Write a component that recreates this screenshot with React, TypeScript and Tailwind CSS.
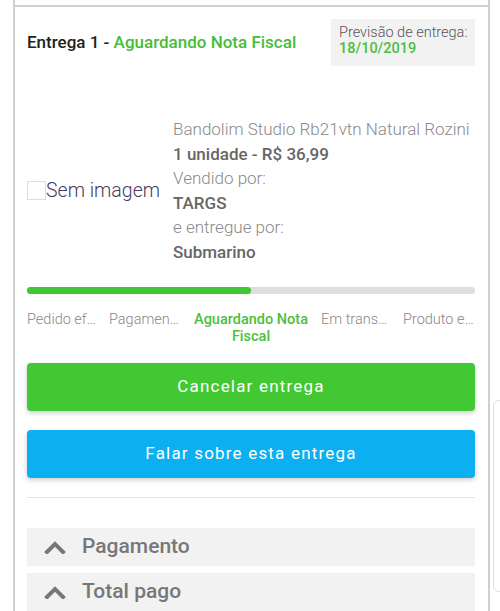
const steps = [
  { label: "Pedido efetuado", active: false },
  { label: "Pagamento confirmado", active: false },
  { label: "Aguardando Nota Fiscal", active: true },
  { label: "Em transporte", active: false },
  { label: "Produto entregue", active: false },
];

function ChevronUp() {
  return (
    <svg width="22" height="14" viewBox="0 0 22 14" className="shrink-0">
      <polyline points="3,12 11,4 19,12" fill="none" stroke="#777" strokeWidth="4" strokeLinecap="square" />
    </svg>
  );
}

function Accordion({ title }: { title: string }) {
  return (
    <div className="flex h-[38px] items-center gap-4 bg-[#f2f2f2] pl-[17px]">
      <ChevronUp />
      <span className="text-[21px] font-medium text-[#777]">{title}</span>
    </div>
  );
}

export default function App() {
  return (
    <div className="relative h-[611px] w-[500px] overflow-hidden bg-white font-['Roboto',sans-serif]">
      <div className="ml-[13px] mr-[10px] h-[5px] border-x-2 border-[#cfcfcf]" />
      <div className="ml-[13px] mr-[10px] border-x-2 border-t-2 border-[#cfcfcf] pl-[12px] pr-[13px]">
        {/* header */}
        <div className="flex items-center justify-between pt-[12px]">
          <p className="text-[17px] font-medium text-[#222]">
            Entrega 1 - <span className="text-[#47bd3a]">Aguardando Nota Fiscal</span>
          </p>
          <div className="w-[144px] bg-[#f2f2f2] pb-[9px] pl-[8px] pt-[6px] text-[14.5px] leading-[16px]">
            <p className="font-light text-[#555]">Previsão de entrega:</p>
            <p className="font-medium text-[#4cbf3c]">18/10/2019</p>
          </div>
        </div>

        {/* product */}
        <div className="mt-[51px] flex items-center">
          <div className="flex w-[146px] items-center">
            <div className="h-[19px] w-[19px] border border-[#ddd]" />
            <span className="text-[19.5px] font-light text-[#4a3a60]">Sem imagem</span>
          </div>
          <div className="text-[17px] leading-[24.6px] text-[#8a8a8a]">
            <p className="font-light">Bandolim Studio Rb21vtn Natural Rozini</p>
            <p className="font-medium text-[#666]">1 unidade - R$ 36,99</p>
            <p className="font-light">Vendido por:</p>
            <p className="font-medium text-[#666]">TARGS</p>
            <p className="font-light">e entregue por:</p>
            <p className="font-medium text-[#666]">Submarino</p>
          </div>
        </div>

        {/* progress */}
        <div className="mt-[22px] h-[7px] w-full rounded-full bg-[#dedede]">
          <div className="h-[7px] w-[50%] rounded-full bg-[#40c634]" />
        </div>
        <div className="mt-[17px] flex gap-[10px] text-[14.5px] leading-[17px]">
          {steps.map((s) =>
            s.active ? (
              <div key={s.label} className="flex-1 text-center font-medium text-[#4cbf3c]">
                {s.label}
              </div>
            ) : (
              <div key={s.label} className="w-[72px] truncate font-light text-[#888]">
                {s.label}
              </div>
            )
          )}
        </div>

        {/* buttons */}
        <button className="mt-[18px] flex h-[48px] w-full items-center justify-center rounded-[4px] bg-[#41c832] text-[17px] tracking-[0.07em] text-white shadow-[0_2px_5px_rgba(0,0,0,0.2)]">
          Cancelar entrega
        </button>
        <button className="mt-[19px] flex h-[48px] w-full items-center justify-center rounded-[4px] bg-[#0caff0] text-[17px] tracking-[0.07em] text-white shadow-[0_2px_5px_rgba(0,0,0,0.2)]">
          Falar sobre esta entrega
        </button>
        <div className="mt-[19px] h-px w-full bg-[#e4e4e4]" />

        <div className="mt-[30px] flex flex-col gap-[7px]">
          <Accordion title="Pagamento" />
          <Accordion title="Total pago" />
        </div>
      </div>
      <div className="absolute left-[493px] top-[400px] h-[192px] w-[20px] rounded-[6px] border border-[#ddd]" />
    </div>
  );
}
